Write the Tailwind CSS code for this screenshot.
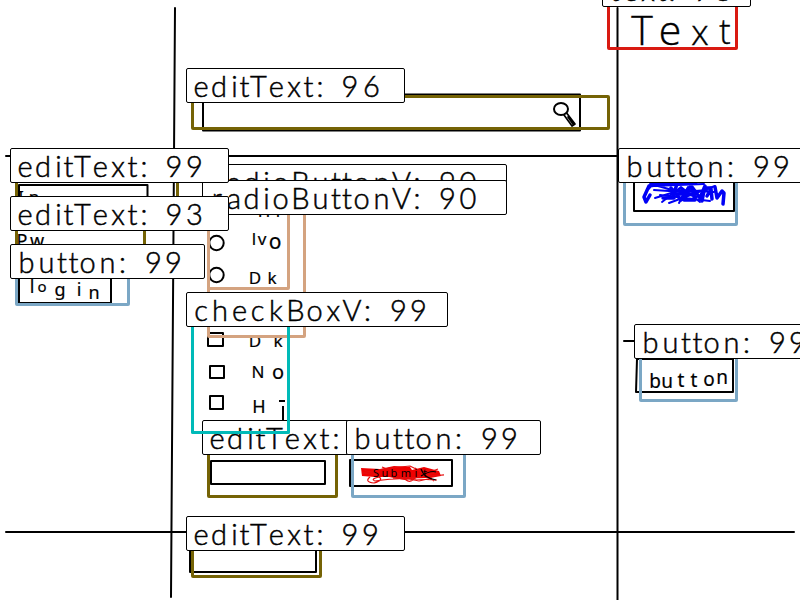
<!DOCTYPE html>
<html lang="en">
<head>
<meta charset="utf-8">
<title>Widget detections</title>
<script src="https://cdn.jsdelivr.net/npm/@tailwindcss/browser@4"></script>
</head>
<body class="bg-white">
<main class="relative h-[600px] w-[800px] overflow-hidden bg-white text-black [&_div>svg]:stroke-black [&_div>svg]:stroke-[0.5px]">

<!-- hand-drawn wireframe -->
<svg class="absolute inset-0 h-[600px] w-[800px] fill-none stroke-black stroke-2" viewBox="0 0 800 600" stroke-linecap="round" stroke-linejoin="round">
  <path d="M175 8L171 597M617.5 8V600M6 156H617M6 532H794M624 341H635"/>
  <path d="M203 96V130M203 94.500H580V130.500H203"/>
  <ellipse cx="561" cy="109" rx="7" ry="6"/>
  <path d="M564 115L572 126L575 124L567 113.500M568 117L573 124" stroke-width="1.700"/>
  <path d="M19 185H147.500V197M19 185V197M19 278V303H111V278"/>
  <circle cx="216.500" cy="243" r="7.200"/>
  <circle cx="216.500" cy="275" r="7.200"/>
  <path d="M208 333H223V346H208ZM210 366H224V378H210ZM210 396H223V409H210Z"/>
  <path d="M211 461H325V484H211ZM350 460H452V486H350ZM190 550V572H316V550"/>
  <path d="M634 180V211H734V180M637 359H733V392H636Z"/>
</svg>

<!-- handwriting and scribbles -->
<svg class="absolute inset-0 h-[600px] w-[800px] fill-black font-['Noto_Sans',sans-serif]" viewBox="0 0 800 600" text-anchor="middle">
  <text class="font-['Open_Sans','Noto_Sans',sans-serif]" font-size="41" font-weight="300" stroke="#000" stroke-width=".4" x="642 670" y="45 45">Te<tspan font-size="35" x="700" y="45">x</tspan><tspan font-size="34" x="725" y="44">t</tspan></text>
  <g font-size="17" stroke="#000" stroke-width=".2">
    <text x="21 34" y="203">In</text>
    <text font-size="18" x="22 37 48" y="247">Pw.</text>
    <text font-size="18" x="32" y="293">l<tspan font-size="15" x="42" y="292">o</tspan><tspan x="60" y="296">g</tspan><tspan x="79" y="296">i</tspan><tspan x="94" y="299">n</tspan></text>
    <text x="264 278" y="217">Hi</text>
    <text x="254 262 275" y="245 245 249">lv<tspan font-size="21">o</tspan></text>
    <text x="255 272" y="284">Dk</text>
    <text x="255 278" y="347">Dk</text>
    <text x="258 278" y="378 379">N<tspan font-size="20">o</tspan></text>
    <text font-size="18" x="259" y="413">H</text>
    <text font-size="19" x="655 667 681 694 709 722" y="388 388 387 387 386 384">button</text>
  </g>
  <path d="M279 401H285M283 406V420" fill="none" stroke="#000" stroke-width="2"/>
  <path d="M361 468L380 469L394 466L410 467L412 470L424 467L439 471L441 476L430 478L417 478L405 480L389 477L375 477L362 476Z" fill="#f00000"/>
  <path d="M364 470L379 475L362 473L390 468L410 466L418 470L438 472L423 476L444 475L404 478L419 481L432 478M370 477Q364 482 374 483Q384 480 379 477Q370 479 375 481Q404 477 406 480Q410 483 414 479Q398 476 393 478L437 480M382 467L412 479L438 469M415 468L434 481" fill="none" stroke="#e60c0c" stroke-width="1.200"/>
  <text font-size="11" x="376 385 394 406 416 425" y="477">Submit</text>
  <path d="M421 469Q424 478 436 480M421 476Q431 470 436 472" fill="none" stroke="#000" stroke-width="1.200"/>
  <g fill="none" stroke="#0000f5" stroke-linejoin="round" stroke-linecap="round">
    <path stroke-width="3.500" d="M661 184L649 186L644 197L646 202L650 195M652 184L647 190M663 198H674L671 188L681 200L690 187L684 200H695L692 187L700 198L705 186L702 201M673 194H696M677 184L673 196M707 196L711 189L712 199M715 187L717 198L722 191L724 193L723 204M704 188H711"/>
    <path stroke-width="2" d="M650 184H697M652 186L704 184M654 190L684 192L707 190M655 198L681 190L714 192M662 202L681 187L700 202M658 186L697 197M669 203L715 186M660 195L710 201M679 203L688 187"/>
  </g>
</svg>

<!-- detection frames -->
<div class="absolute left-[607px] top-[-20px] h-[70px] w-[131px] rounded-[2px] border-3 border-[#d91a12]"></div>
<div class="absolute left-[191px] top-[95px] h-[35px] w-[419px] rounded-[2px] border-3 border-[#756305]"></div>
<div class="absolute left-[15px] top-[180px] h-[20px] w-[164px] rounded-[2px] border-3 border-[#756305]"></div>
<div class="absolute left-[15px] top-[210px] h-[50px] w-[131px] rounded-[2px] border-3 border-[#756305]"></div>
<div class="absolute left-[15px] top-[270px] h-[36px] w-[115px] rounded-[2px] border-3 border-[#7ba7c5]"></div>
<div class="absolute left-[207px] top-[190px] h-[148px] w-[99px] rounded-[2px] border-3 border-[#d4a380]"></div>
<div class="absolute left-[207px] top-[190px] h-[100px] w-[83px] rounded-[2px] border-3 border-[#d4a380]"></div>
<div class="absolute left-[207px] top-[440px] h-[58px] w-[131px] rounded-[2px] border-3 border-[#756305]"></div>
<div class="absolute left-[351px] top-[440px] h-[58px] w-[115px] rounded-[2px] border-3 border-[#7ba7c5]"></div>
<div class="absolute left-[191px] top-[540px] h-[38px] w-[131px] rounded-[2px] border-3 border-[#756305]"></div>
<div class="absolute left-[623px] top-[170px] h-[56px] w-[115px] rounded-[2px] border-3 border-[#7ba7c5]"></div>
<div class="absolute left-[639px] top-[346px] h-[56px] w-[99px] rounded-[2px] border-3 border-[#7ba7c5]"></div>

<!-- detection labels -->
<div class="absolute left-[602px] top-[-28px] h-[35px] w-[149px] rounded-[2px] border border-black bg-white">
  <svg class="block h-full w-full overflow-visible font-['Lato',sans-serif] text-[29px] font-light" text-anchor="middle"><text x="12 28 45 59 69 99 120" y="28">text:98</text></svg>
</div>
<div class="absolute left-[186px] top-[68px] h-[35px] w-[219px] rounded-[2px] border border-black bg-white">
  <svg class="block h-full w-full font-['Lato',sans-serif] text-[29px] font-light" text-anchor="middle"><text x="14 32 47.500 57.500 71.500 89.200 107 121.500 133 163 184.500" y="28">editText:96</text></svg>
</div>
<div class="absolute left-[202px] top-[164px] h-[35px] w-[305px] rounded-[2px] border border-black bg-white">
  <svg class="block h-full w-full font-['Lato',sans-serif] text-[29px] font-light" text-anchor="middle"><text x="14 31 48.500 63.500 77.500 97.500 117.500 133 144 158.500 178.500 198.500 214 244.500 265" y="28">radioButtonV:90</text></svg>
</div>
<div class="absolute left-[202px] top-[180px] h-[35px] w-[305px] rounded-[2px] border border-black bg-white">
  <svg class="block h-full w-full font-['Lato',sans-serif] text-[29px] font-light" text-anchor="middle"><text x="14 31 48.500 63.500 77.500 97.500 117.500 133 144 158.500 178.500 198.500 214 244.500 265" y="28">radioButtonV:90</text></svg>
</div>
<div class="absolute left-[10px] top-[148px] h-[35px] w-[219px] rounded-[2px] border border-black bg-white">
  <svg class="block h-full w-full font-['Lato',sans-serif] text-[29px] font-light" text-anchor="middle"><text x="14 32 47.500 57.500 71.500 89.200 107 121.500 133 163 183.500" y="28">editText:99</text></svg>
</div>
<div class="absolute left-[10px] top-[196px] h-[35px] w-[219px] rounded-[2px] border border-black bg-white">
  <svg class="block h-full w-full font-['Lato',sans-serif] text-[29px] font-light" text-anchor="middle"><text x="14 32 47.500 57.500 71.500 89.200 107 121.500 133 163 183.500" y="28">editText:93</text></svg>
</div>
<div class="absolute left-[10px] top-[244px] h-[35px] w-[195px] rounded-[2px] border border-black bg-white">
  <svg class="block h-full w-full font-['Lato',sans-serif] text-[29px] font-light" text-anchor="middle"><text x="15.500 35.500 51 62.500 76.500 96.500 111.500 142.300 162.300" y="28">button:99</text></svg>
</div>
<div class="absolute left-[186px] top-[292px] h-[35px] w-[262px] rounded-[2px] border border-black bg-white">
  <svg class="block h-full w-full font-['Lato',sans-serif] text-[29px] font-light" text-anchor="middle"><text x="14 33 52.500 70.500 89 108.500 127.500 146.300 165 180.500 211.500 231.500" y="28">checkBoxV:99</text></svg>
</div>
<div class="absolute left-[202px] top-[420px] h-[35px] w-[219px] rounded-[2px] border border-black bg-white">
  <svg class="block h-full w-full font-['Lato',sans-serif] text-[29px] font-light" text-anchor="middle"><text x="14 32 47.500 57.500 71.500 89.200 107 121.500 133" y="28">editText:</text></svg>
</div>
<div class="absolute left-[346px] top-[420px] h-[35px] w-[195px] rounded-[2px] border border-black bg-white">
  <svg class="block h-full w-full font-['Lato',sans-serif] text-[29px] font-light" text-anchor="middle"><text x="15.500 35.500 51 62.500 76.500 96.500 111.500 142.300 162.300" y="28">button:99</text></svg>
</div>
<div class="absolute left-[186px] top-[516px] h-[35px] w-[219px] rounded-[2px] border border-black bg-white">
  <svg class="block h-full w-full font-['Lato',sans-serif] text-[29px] font-light" text-anchor="middle"><text x="14 32 47.500 57.500 71.500 89.200 107 121.500 133 163 183.500" y="28">editText:99</text></svg>
</div>
<div class="absolute left-[618px] top-[148px] h-[35px] w-[195px] rounded-[2px] border border-black bg-white">
  <svg class="block h-full w-full font-['Lato',sans-serif] text-[29px] font-light" text-anchor="middle"><text x="15.500 35.500 51 62.500 76.500 96.500 111.500 142.300 162.300" y="28">button:99</text></svg>
</div>
<div class="absolute left-[634px] top-[324px] h-[35px] w-[195px] rounded-[2px] border border-black bg-white">
  <svg class="block h-full w-full font-['Lato',sans-serif] text-[29px] font-light" text-anchor="middle"><text x="15.500 35.500 51 62.500 76.500 96.500 111.500 142.300 162.300" y="28">button:99</text></svg>
</div>

<!-- checkbox group frame, open behind its label -->
<div class="absolute left-[191px] top-[327px] h-[107px] w-[99px] rounded-b-[2px] border-3 border-t-0 border-[#00bab8]"></div>
</main>
</body>
</html>
